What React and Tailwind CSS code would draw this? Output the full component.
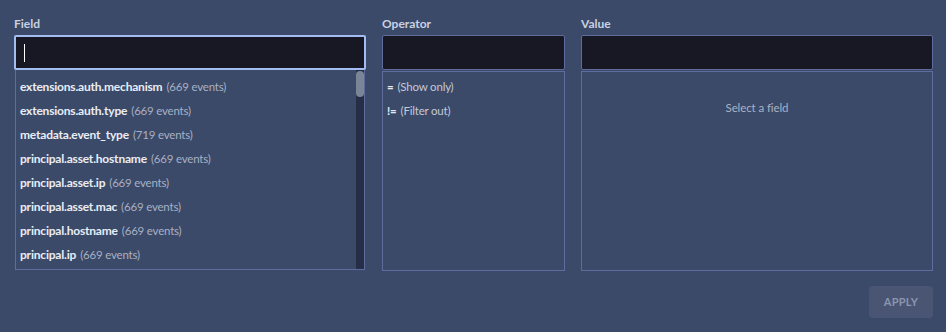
import React from 'react';

const fields = [
  ['extensions.auth.mechanism', 669],
  ['extensions.auth.type', 669],
  ['metadata.event_type', 719],
  ['principal.asset.hostname', 669],
  ['principal.asset.ip', 669],
  ['principal.asset.mac', 669],
  ['principal.hostname', 669],
  ['principal.ip', 669],
];

const operators = [
  ['=', '(Show only)'],
  ['!=', '(Filter out)'],
];

export default function App() {
  return (
    <div className="w-[946px] h-[332px] bg-[#3b4a69] pl-[14px] pr-[13px] pt-[14px]" style={{ fontFamily: 'Lato, "Open Sans", sans-serif' }}>
      <div className="grid grid-cols-[352px_183px_352px] gap-x-4">
        {/* Field */}
        <div className="flex flex-col">
          <label className="h-[21px] text-[12px] font-bold text-[#c9d1e2] leading-5">Field</label>
          <div className="h-[35px] bg-[#181824] border-2 border-[#a3bdf2] rounded-[2px] flex items-center px-2">
            <div className="w-px h-[18px] bg-white" />
          </div>
          <div className="h-[200px] mx-px border border-t-0 border-[#5f6d9e] flex">
            <div className="flex-1 pt-[5px] pl-[4px]">
              {fields.map(([name, n]) => (
                <div key={name} className="h-6 flex items-center gap-1 whitespace-nowrap tracking-[-0.2px]">
                  <span className="font-bold text-[12px] text-[#e9edf5]">{name}</span>
                  <span className="text-[#a8b0c3] text-[11.5px]">({n} events)</span>
                </div>
              ))}
            </div>
            <div className="w-2 bg-[#252e46] pt-px">
              <div className="h-[26px] rounded-full bg-[#7b8598]" />
            </div>
          </div>
        </div>

        {/* Operator */}
        <div className="flex flex-col">
          <label className="h-[21px] text-[12px] font-bold text-[#c9d1e2] leading-5">Operator</label>
          <div className="h-[35px] bg-[#181824] border border-[#5f6d9e] rounded-[2px]" />
          <div className="h-[200px] mt-px border border-[#5f6d9e] pt-[3px] pl-[4px]">
            {operators.map(([op, label]) => (
              <div key={op} className="h-6 flex items-center gap-1 text-[11.5px] tracking-[-0.2px] text-[#c3c9d7]">
                <span className="font-bold text-[#e3e7f0]">{op}</span>
                <span>{label}</span>
              </div>
            ))}
          </div>
        </div>

        {/* Value */}
        <div className="flex flex-col">
          <label className="h-[21px] text-[12px] font-bold text-[#c9d1e2] leading-5">Value</label>
          <div className="h-[35px] bg-[#181824] border border-[#5f6d9e] rounded-[2px]" />
          <div className="h-[200px] mt-px border border-[#5f6d9e] flex justify-center pt-[27px]">
            <span className="text-[11.5px] tracking-[-0.1px] text-[#aab2c4]">Select a field</span>
          </div>
        </div>
      </div>

      <div className="flex justify-end mt-[15px]">
        <button className="w-16 h-8 rounded bg-[#4a5574] text-[11px] font-bold tracking-wide text-[#8b95ae]">APPLY</button>
      </div>
    </div>
  );
}
